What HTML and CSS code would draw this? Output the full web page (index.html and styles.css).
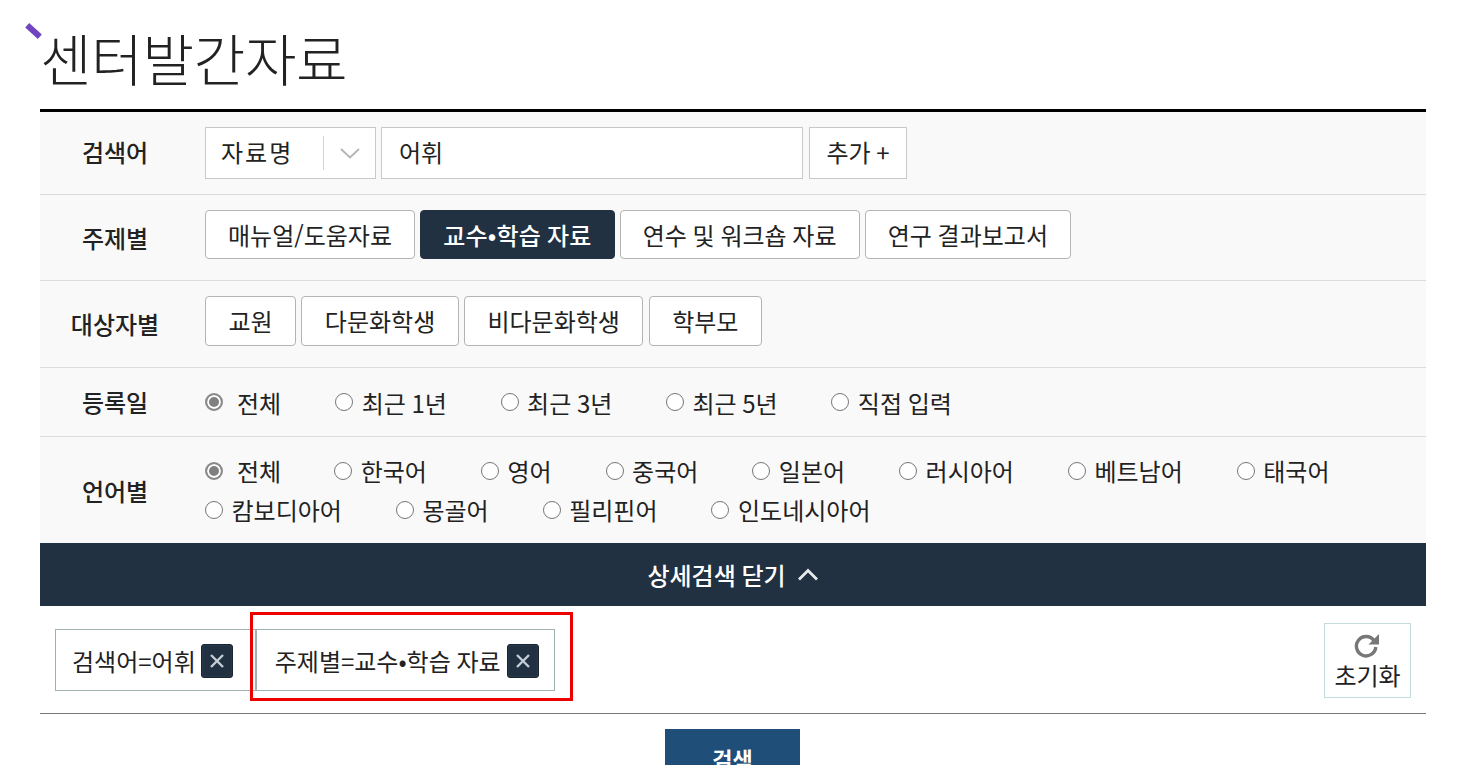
FILE: index.html
```html
<!DOCTYPE html>
<html lang="ko">
<head>
    <meta charset="UTF-8">
    <meta name="viewport" content="width=device-width, initial-scale=1.0">
    <title>센터발간자료</title>
    <link rel="stylesheet" href="styles.css">
</head>
<body>
    <div class="wrap">
        <h1 class="page-title"><span class="title-mark"></span>센터발간자료</h1>

        <div class="search-box">
            <div class="row row-keyword">
                <div class="row-label">검색어</div>
                <div class="row-body keyword-body">
                    <div class="select-box">
                        <span class="select-text">자료명</span>
                        <span class="select-arrow">
                            <svg width="20" height="11" viewBox="0 0 20 11"><path d="M1 1l9 8.500 9-8.500" fill="none" stroke="#b4b4b4" stroke-width="1.800"/></svg>
                        </span>
                    </div>
                    <div class="keyword-input">어휘</div>
                    <div class="add-btn">추가 +</div>
                </div>
            </div>

            <div class="row row-topic">
                <div class="row-label">주제별</div>
                <div class="row-body btn-list">
                    <a class="opt-btn">매뉴얼/도움자료</a>
                    <a class="opt-btn active">교수•학습 자료</a>
                    <a class="opt-btn">연수 및 워크숍 자료</a>
                    <a class="opt-btn">연구 결과보고서</a>
                </div>
            </div>

            <div class="row row-target">
                <div class="row-label">대상자별</div>
                <div class="row-body btn-list">
                    <a class="opt-btn">교원</a>
                    <a class="opt-btn">다문화학생</a>
                    <a class="opt-btn">비다문화학생</a>
                    <a class="opt-btn">학부모</a>
                </div>
            </div>

            <div class="row row-date">
                <div class="row-label">등록일</div>
                <div class="row-body radio-list date-list">
                    <label class="radio first"><i class="dot on"></i>전체</label>
                    <label class="radio"><i class="dot"></i>최근 1년</label>
                    <label class="radio"><i class="dot"></i>최근 3년</label>
                    <label class="radio"><i class="dot"></i>최근 5년</label>
                    <label class="radio"><i class="dot"></i>직접 입력</label>
                </div>
            </div>

            <div class="row row-lang">
                <div class="row-label">언어별</div>
                <div class="row-body radio-list lang-list">
                    <label class="radio first"><i class="dot on"></i>전체</label>
                    <label class="radio"><i class="dot"></i>한국어</label>
                    <label class="radio"><i class="dot"></i>영어</label>
                    <label class="radio"><i class="dot"></i>중국어</label>
                    <label class="radio"><i class="dot"></i>일본어</label>
                    <label class="radio"><i class="dot"></i>러시아어</label>
                    <label class="radio"><i class="dot"></i>베트남어</label>
                    <label class="radio"><i class="dot"></i>태국어</label>
                    <label class="radio"><i class="dot"></i>캄보디아어</label>
                    <label class="radio"><i class="dot"></i>몽골어</label>
                    <label class="radio"><i class="dot"></i>필리핀어</label>
                    <label class="radio"><i class="dot"></i>인도네시아어</label>
                </div>
            </div>
        </div>

        <div class="detail-bar">
            상세검색 닫기
            <svg width="22" height="13" viewBox="0 0 22 13"><path d="M2 11.500l9-9 9 9" fill="none" stroke="#e8ebee" stroke-width="2.800"/></svg>
        </div>

        <div class="filter-area">
            <div class="filter-tags">
                <div class="tag">검색어=어휘<span class="tag-x"><svg width="16" height="16" viewBox="0 0 16 16"><path d="M2 2l12 12M14 2l-12 12" stroke="#c5ced6" stroke-width="2.400"/></svg></span></div>
                <div class="tag tag-marked">주제별=교수•학습 자료<span class="tag-x"><svg width="16" height="16" viewBox="0 0 16 16"><path d="M2 2l12 12M14 2l-12 12" stroke="#c5ced6" stroke-width="2.400"/></svg></span><span class="red-frame"></span></div>
            </div>
            <div class="reset-btn">
                <svg class="reset-icon" width="26" height="25" viewBox="0 0 26 25"><path d="M20 7.500A9.700 9.700 0 1 0 21.800 14" fill="none" stroke="#777" stroke-width="3.400"/><path d="M25 1v10.500h-10.500z" fill="#777"/></svg>
                <span class="reset-text">초기화</span>
            </div>
        </div>

        <div class="submit-row">
            <a class="submit-btn">검색</a>
        </div>
    </div>
</body>
</html>
```

FILE: styles.css
```css
* {
    margin: 0;
    padding: 0;
    box-sizing: border-box;
}

html, body {
    height: 765px;
    overflow: hidden;
}

body {
    font-family: "Noto Sans CJK KR", "Noto Sans", sans-serif;
    background: #ffffff;
    color: #222222;
    font-size: 24px;
    word-spacing: -1px;
}

.wrap {
    width: 1386px;
    margin-left: 40px;
}

.page-title {
    position: relative;
    height: 109px;
    padding-top: 19px;
    font-size: 56px;
    line-height: 76px;
    font-weight: 300;
    letter-spacing: -0.300px;
    color: #222222;
}

.title-mark {
    position: absolute;
    left: -15px;
    top: 28px;
    width: 17px;
    height: 6px;
    background: #6f46c0;
    transform: rotate(42deg);
}

/* search table */
.search-box {
    border-top: 3px solid #000000;
    background: #f9f9f9;
}

.row {
    display: flex;
    align-items: center;
    border-bottom: 1px solid #dcdcdc;
}

.row-lang {
    border-bottom: 0;
    height: 106px;
}

.row-keyword { height: 83px; }
.row-topic { height: 86px; }
.row-target { height: 87px; }
.row-date { height: 69px; }

.row-label {
    width: 150px;
    flex-shrink: 0;
    text-align: center;
    font-weight: 500;
    line-height: 32px;
    color: #222222;
}

.row-keyword .row-label {
    padding-bottom: 2px;
}

.row-lang .row-label {
    padding-top: 2px;
}

.row-body {
    flex: 1;
    padding-left: 15px;
}

.keyword-body {
    display: flex;
    gap: 5px;
}

.select-box {
    width: 171px;
    height: 52px;
    display: flex;
    align-items: center;
    background: #ffffff;
    border: 1px solid #c8c8c8;
}

.select-text {
    width: 117px;
    padding: 0 0 3px 15px;
    letter-spacing: 2px;
}

.select-arrow {
    height: 34px;
    flex: 1;
    display: flex;
    align-items: center;
    justify-content: center;
    border-left: 1px solid #d4d4d4;
}

.keyword-input {
    width: 422px;
    height: 52px;
    line-height: 48px;
    padding-left: 17px;
    background: #ffffff;
    border: 1px solid #c8c8c8;
}

.add-btn {
    width: 98px;
    height: 52px;
    margin-left: 1px;
    line-height: 48px;
    text-align: center;
    background: #ffffff;
    border: 1px solid #c8c8c8;
}

.btn-list {
    display: flex;
    gap: 5.200px;
    padding-bottom: 6px;
}

.row-topic .btn-list {
    padding-bottom: 7px;
}

.opt-btn {
    height: 50px;
    line-height: 48px;
    padding: 0 22.500px;
    background: #ffffff;
    border: 1px solid #b4b4b4;
    border-radius: 4px;
    color: #222222;
}

.row-topic .opt-btn {
    height: 49px;
    line-height: 47px;
    padding: 0 22px;
}

.opt-btn.active {
    background: #213141;
    border-color: #213141;
    color: #ffffff;
    font-weight: 500;
    letter-spacing: 0.200px;
}

.radio-list {
    display: flex;
    flex-wrap: wrap;
}

.radio {
    display: flex;
    align-items: center;
    height: 39px;
    margin-right: 54px;
}

.date-list .radio {
    margin-right: 53.600px;
}

.date-list .radio.first {
    margin-right: 54px;
}

.lang-list .radio.first {
    margin-right: 53px;
}

.radio.first .dot {
    margin-right: 14px;
}

.dot {
    width: 18px;
    height: 18px;
    margin-right: 8.500px;
    border: 1px solid #767676;
    border-radius: 50%;
    background: #ffffff;
}

.dot.on {
    border: 2px solid #8a8a8a;
    background: #808080;
    box-shadow: inset 0 0 0 2px #ffffff;
}

/* bar under the table */
.detail-bar {
    height: 63px;
    display: flex;
    align-items: center;
    justify-content: center;
    gap: 11px;
    background: #213141;
    color: #ffffff;
    font-weight: 500;
}

.filter-area {
    height: 108px;
    display: flex;
    justify-content: space-between;
    align-items: flex-start;
    padding: 17px 15px 0;
    border-bottom: 1px solid #777777;
}

.filter-tags {
    display: flex;
    padding-top: 6px;
}

.tag {
    height: 62px;
    display: flex;
    align-items: center;
    gap: 5px;
    padding: 0 22px 0 16px;
    border: 1px solid #9fb2b2;
    background: #ffffff;
}

.tag-marked {
    position: relative;
    gap: 6px;
    padding: 0 15px 0 18px;
}

.red-frame {
    position: absolute;
    left: -7px;
    top: -18px;
    right: -19px;
    bottom: -11px;
    border: 3px solid #ee0000;
    pointer-events: none;
}

.tag-x {
    width: 32px;
    height: 34px;
    margin-top: 2px;
    display: flex;
    align-items: center;
    justify-content: center;
    background: #213141;
    border: 1px solid #18242f;
    border-radius: 3px;
    box-shadow: inset 0 0 2px #3a4d5f;
}

.reset-btn {
    width: 87px;
    height: 75px;
    display: flex;
    flex-direction: column;
    align-items: center;
    padding-top: 9px;
    border: 1px solid #c6dcdc;
    line-height: 30px;
}

.reset-icon {
    margin-right: 2px;
}

.reset-text {
    margin-top: 2px;
}

.submit-row {
    display: flex;
    justify-content: center;
    padding-top: 15px;
    padding-right: 1px;
}

.submit-btn {
    width: 135px;
    height: 56px;
    line-height: 58px;
    font-size: 22px;
    text-align: center;
    background: #1f4e79;
    color: #ffffff;
    font-weight: 700;
}
```
